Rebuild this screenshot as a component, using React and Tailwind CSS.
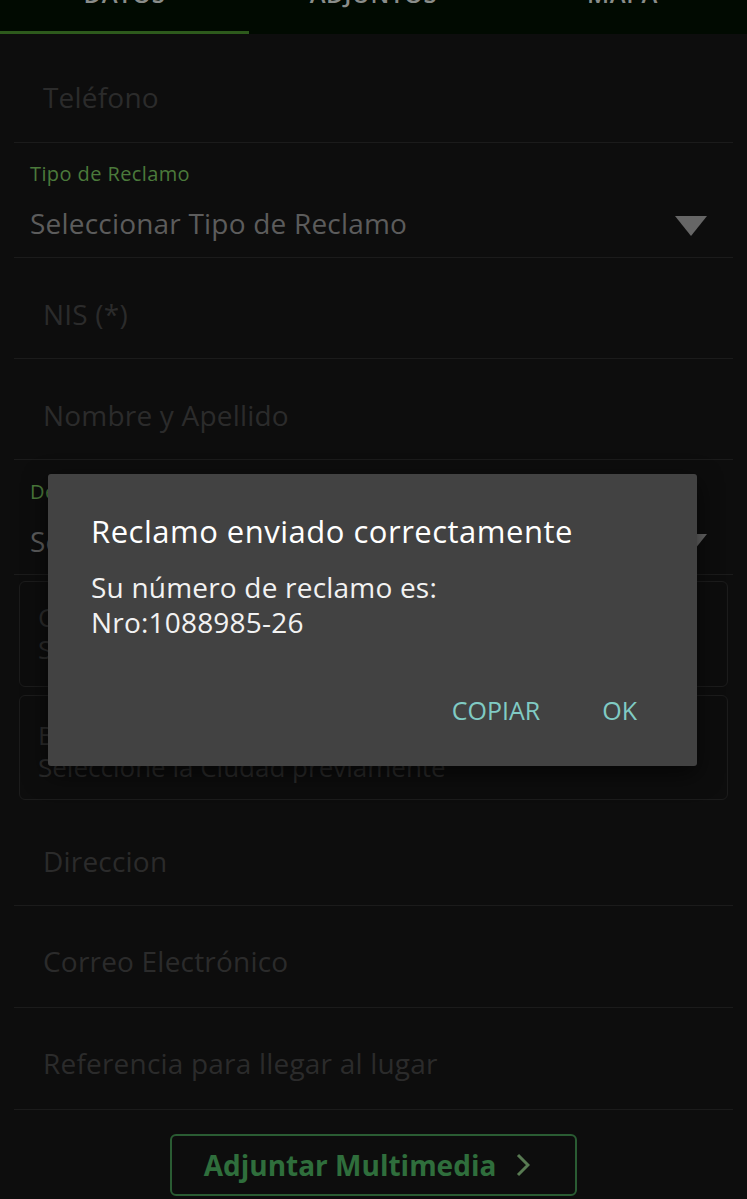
import React from 'react';

const font = { fontFamily: '"Open Sans", Lato, sans-serif' };

function Field({ text, className = '' }) {
  return (
    <div className={`border-b border-[#1b1b1b] pl-[29px] ${className}`}>
      <span className="block text-[28px] leading-[32px] tracking-[0.2px] text-[#2b2b2b]">{text}</span>
    </div>
  );
}

function SelectField({ label, value, className = '' }) {
  return (
    <div className={`border-b border-[#1b1b1b] pl-[16px] pr-[26px] ${className}`}>
      <div className="text-[20px] leading-[24px] tracking-[0.4px] text-[#4b7a3b]">{label}</div>
      <div className="mt-[21px] flex items-center justify-between">
        <span className="text-[28px] leading-[32px] tracking-[0.2px] text-[#5c5c5c]">{value}</span>
        <svg width="32" height="20" viewBox="0 0 32 20" className="mt-[6px]">
          <path d="M0 0 H32 L16 20 Z" fill="#666" />
        </svg>
      </div>
    </div>
  );
}

function BoxField({ label, value, className = '' }) {
  return (
    <div className={`mx-[5px] rounded-[6px] border border-[#1c1c1c] pl-[18px] ${className}`}>
      <div className="text-[26px] leading-[32px] text-[#2b2b2b]">{label}</div>
      <div className="text-[26px] leading-[32px] text-[#2b2b2b]">{value}</div>
    </div>
  );
}

export default function App() {
  return (
    <div className="relative h-[1199px] w-[747px] overflow-hidden bg-[#0d0d0d]" style={font}>
      {/* tabs */}
      <div className="-mt-[43px] grid h-[77px] grid-cols-3 bg-[#010a01]">
        {['DATOS', 'ADJUNTOS', 'MAPA'].map((t, i) => (
          <div key={t} className="flex flex-col">
            <div className="flex flex-1 items-center justify-center text-[24px] font-semibold tracking-wide text-[#8a8d8a]">
              {t}
            </div>
            <div className={`h-[3px] ${i === 0 ? 'bg-[#2d5a1c]' : 'bg-transparent'}`} />
          </div>
        ))}
      </div>

      <div className="px-[14px]">
        <Field text="Teléfono" className="h-[109px] pt-[47px]" />
        <SelectField label="Tipo de Reclamo" value="Seleccionar Tipo de Reclamo" className="h-[115px] pt-[19px]" />
        <Field text="NIS (*)" className="h-[101px] pt-[40px]" />
        <Field text="Nombre y Apellido" className="h-[101px] pt-[40px]" />
        <SelectField label="Departamento" value="Seleccionar Departamento" className="h-[115px] pt-[20px]" />
        <BoxField label="Ciudad (*)" value="Seleccionar Ciudad" className="mt-[6px] h-[106px] pt-[19px]" />
        <BoxField label="Barrio" value="Seleccione la Ciudad previamente" className="mt-[8px] h-[105px] pt-[23px]" />
        <Field text="Direccion" className="h-[106px] pt-[45px]" />
        <Field text="Correo Electrónico" className="h-[102px] pt-[39px]" />
        <Field text="Referencia para llegar al lugar" className="h-[102px] pt-[39px]" />
      </div>

      <div className="mt-[24px] flex justify-center">
        <button className="flex h-[62px] w-[407px] items-center justify-center gap-[20px] rounded-[6px] border-2 border-[#2a5c33] pr-[13px] text-[28px] font-bold text-[#2f6e3c]">
          Adjuntar Multimedia
          <svg width="14" height="26" viewBox="0 0 14 26">
            <path d="M2 3 L12 13 L2 23" fill="none" stroke="#587a52" strokeWidth="3" />
          </svg>
        </button>
      </div>

      {/* dialog */}
      <div className="absolute left-[48px] top-[474px] h-[292px] w-[649px] rounded-[3px] bg-[#424242] px-[43px] pt-[39px] shadow-[0_8px_24px_rgba(0,0,0,0.6)]">
        <div className="text-[31px] leading-[36px] tracking-[0.5px] text-white">Reclamo enviado correctamente</div>
        <div className="mt-[21px] text-[28px] leading-[35px] tracking-[0.2px] text-[#f2f2f2]">
          <div>Su número de reclamo es:</div>
          <div>Nro:1088985-26</div>
        </div>
        <div className="mt-[55px] flex justify-end gap-[62px] pr-[17px] text-[25px] leading-[30px] text-[#80cbc4]">
          <span>COPIAR</span>
          <span>OK</span>
        </div>
      </div>
    </div>
  );
}
